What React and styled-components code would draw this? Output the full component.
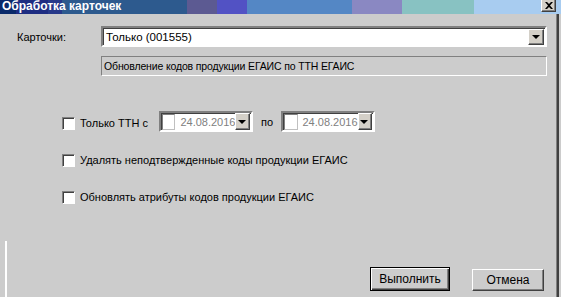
import React from 'react';
import styled, { createGlobalStyle } from 'styled-components';

const GlobalStyle = createGlobalStyle`
	html, body {
		margin: 0;
		padding: 0;
		background: #cccccc;
	}
	body {
		font-family: "Liberation Sans", Arial, sans-serif;
		font-size: 11px;
		color: #000;
	}
`;

const DateField = ({ value, first }) => (
	<DateBox first={first}>
		<DateCheck />
		<DateText>{value}</DateText>
		<DropButton small />
	</DateBox>
);

const Option = ({ children, tall }) => (
	<OptionRow tall={tall}>
		<CheckBox />
		{children}
	</OptionRow>
);

export default function App() {
	return (
		<Window>
			<GlobalStyle />
			<TitleBar>
				<TitleText>Обработка карточек</TitleText>
				<CloseButton>
					<svg width="8" height="7" viewBox="0 0 8 7">
						<path d="M0 0h2l2 2 2-2h2L5 3.5 8 7H6L4 5 2 7H0l3-3.5z" fill="#000" />
					</svg>
				</CloseButton>
			</TitleBar>
			<Body>
				<Content>
					<FieldRow>
						<Label>Карточки:</Label>
						<Combo>
							<ComboText>Только (001555)</ComboText>
							<DropButton />
						</Combo>
					</FieldRow>
					<FieldRow>
						<span />
						<ReadOnly>Обновление кодов продукции ЕГАИС по ТТН ЕГАИС</ReadOnly>
					</FieldRow>
					<Options>
						<Option tall>
							<OptionText>Только ТТН с</OptionText>
							<DateField value="24.08.2016" first />
							<Between>по</Between>
							<DateField value="24.08.2016" />
						</Option>
						<Option>
							<OptionText>Удалять неподтвержденные коды продукции ЕГАИС</OptionText>
						</Option>
						<Option>
							<OptionText>Обновлять атрибуты кодов продукции ЕГАИС</OptionText>
						</Option>
					</Options>
					<Footer>
						<EdgeLine />
						<Buttons>
							<Button primary>Выполнить</Button>
							<Button>Отмена</Button>
						</Buttons>
					</Footer>
				</Content>
				<RightEdge />
			</Body>
		</Window>
	);
}

const Window = styled.div`
	width: 561px;
	height: 297px;
	display: flex;
	flex-direction: column;
	background: #cccccc;
	overflow: hidden;
`;

const TitleBar = styled.div`
	height: 14px;
	display: flex;
	align-items: center;
	justify-content: space-between;
	padding: 0 5px 0 2px;
	background: linear-gradient(
		to right,
		#0a2a6a 0px, #0a2a6a 16px,
		#1e2d82 16px, #1e2d82 48px,
		#27398a 48px, #27398a 62px,
		#2d5a8e 62px, #2d5a8e 187px,
		#5c5a92 187px, #5c5a92 217px,
		#5252c4 217px, #5252c4 247px,
		#5487c5 247px, #5487c5 352px,
		#8a88c2 352px, #8a88c2 402px,
		#88c2c2 402px, #88c2c2 474px,
		#a8ccf0 474px, #a8ccf0 561px
	);
`;

const TitleText = styled.div`
	color: #fff;
	font-weight: bold;
	font-size: 12px;
	line-height: 14px;
	margin-top: -2px;
	white-space: nowrap;
`;

const CloseButton = styled.div`
	width: 15px;
	height: 13px;
	box-sizing: border-box;
	align-self: flex-start;
	margin-top: -1px;
	display: flex;
	align-items: center;
	justify-content: center;
	background: #d4d0c8;
	border: 1px solid;
	border-color: #fff #404040 #404040 #fff;
	box-shadow: inset -1px -1px 0 #808080;
`;

const Body = styled.div`
	flex: 1;
	display: flex;
	min-height: 0;
`;

const Content = styled.div`
	flex: 1;
	display: flex;
	flex-direction: column;
	padding: 12px 9px 0 0;
`;

const RightEdge = styled.div`
	width: 2px;
	margin-right: 2px;
	background: #404040;
	border-left: 1px solid #808080;
`;

const FieldRow = styled.div`
	display: grid;
	grid-template-columns: 84px 1fr;
	align-items: center;
	padding-left: 17px;
	margin-bottom: 9px;
`;

const Label = styled.div`
	white-space: nowrap;
`;

const Combo = styled.div`
	height: 21px;
	box-sizing: border-box;
	display: flex;
	align-items: center;
	background: #fff;
	border: 2px solid;
	border-color: #808080 #fff #fff #808080;
	box-shadow: inset 1px 1px 0 #404040;
	padding: 0 1px 0 3px;
`;

const ComboText = styled.div`
	flex: 1;
	font-size: 11.5px;
`;

const DropButton = styled.div`
	width: ${(p) => (p.small ? 15 : 16)}px;
	height: ${(p) => (p.small ? 17 : 16)}px;
	box-sizing: border-box;
	background: #d4d0c8;
	border: 1px solid;
	border-color: #fff #404040 #404040 #fff;
	box-shadow: inset -1px -1px 0 #808080;
	display: flex;
	align-items: center;
	justify-content: center;
	&::after {
		content: '';
		border-left: 4px solid transparent;
		border-right: 4px solid transparent;
		border-top: 4px solid #000;
		margin-right: 1px;
	}
`;

const ReadOnly = styled.div`
	height: 20px;
	box-sizing: border-box;
	display: flex;
	align-items: center;
	border: 1px solid;
	border-color: #808080 #fff #fff #808080;
	padding-left: 2px;
	white-space: nowrap;
	font-size: 10.5px;
	letter-spacing: -0.15px;
`;

const Options = styled.div`
	display: flex;
	flex-direction: column;
	padding-left: 62px;
	margin-top: 26px;
`;

const OptionRow = styled.div`
	display: flex;
	align-items: center;
	height: ${(p) => (p.tall ? 23 : 14)}px;
	margin-bottom: ${(p) => (p.tall ? 18 : 23)}px;
`;

const CheckBox = styled.div`
	width: 13px;
	height: 13px;
	box-sizing: border-box;
	background: #fff;
	border: 1px solid;
	border-color: #808080 #fff #fff #808080;
	box-shadow: inset 1px 1px 0 #404040;
	margin-right: 5px;
	margin-top: 2px;
`;

const OptionText = styled.div`
	white-space: nowrap;
	font-size: 11px;
	margin-top: 1px;
`;

const DateBox = styled.div`
	width: 94px;
	height: 21px;
	box-sizing: border-box;
	display: flex;
	align-items: center;
	background: #fff;
	border: 2px solid;
	border-color: #808080 #fff #fff #808080;
	box-shadow: inset 1px 1px 0 #404040;
	padding: 0 1px 0 1px;
	margin-left: ${(p) => (p.first ? 11 : 8)}px;
	margin-top: -2px;
`;

const DateCheck = styled.div`
	width: 14px;
	height: 16px;
	box-sizing: border-box;
	border: 1px solid;
	border-color: #808080 #c0c0c0 #c0c0c0 #808080;
	margin-right: 5px;
`;

const DateText = styled.div`
	flex: 1;
	color: #808080;
	font-size: 11px;
`;

const Between = styled.div`
	margin-left: 8px;
	margin-top: -2px;
`;

const Footer = styled.div`
	flex: 1;
	display: flex;
	align-items: flex-end;
	padding: 0 3px 6px 5px;
`;

const EdgeLine = styled.div`
	width: 2px;
	align-self: stretch;
	margin-top: 15px;
	margin-bottom: -6px;
	background: #fff;
`;

const Buttons = styled.div`
	margin-left: auto;
	display: flex;
	align-items: flex-end;
	gap: 22px;
`;

const Button = styled.div`
	width: ${(p) => (p.primary ? 80 : 72)}px;
	height: ${(p) => (p.primary ? 24 : 22)}px;
	box-sizing: border-box;
	display: flex;
	align-items: center;
	justify-content: center;
	font-size: 12px;
	background: #cccccc;
	border: 1px solid;
	border-color: ${(p) => (p.primary ? '#000' : '#fff #404040 #404040 #fff')};
	box-shadow: ${(p) =>
		p.primary
			? 'inset 1px 1px 0 #fff, inset -1px -1px 0 #404040, inset -2px -2px 0 #808080'
			: 'inset -1px -1px 0 #808080'};
`;
